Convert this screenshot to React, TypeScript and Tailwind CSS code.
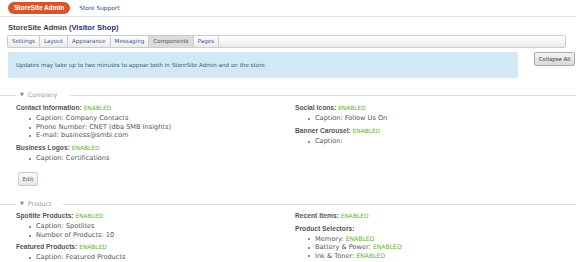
import React from "react";

// ─── Data ─────────────────────────────────────────────────────────────────────
const tabs = ["Settings", "Layout", "Appearance", "Messaging", "Components", "Pages"];

type Item = { label: string; on?: boolean };
type Block = { title: string; on?: boolean; items: Item[] };

const companyLeft: Block[] = [
  {
    title: "Contact Information:",
    on: true,
    items: [
      { label: "Caption: Company Contacts" },
      { label: "Phone Number: CNET (dba SMB Insights)" },
      { label: "E-mail: business@smbi.com" },
    ],
  },
  { title: "Business Logos:", on: true, items: [{ label: "Caption: Certifications" }] },
];

const companyRight: Block[] = [
  { title: "Social Icons:", on: true, items: [{ label: "Caption: Follow Us On" }] },
  { title: "Banner Carousel:", on: true, items: [{ label: "Caption:" }] },
];

const productLeft: Block[] = [
  {
    title: "Spotlite Products:",
    on: true,
    items: [{ label: "Caption: Spotlites" }, { label: "Number of Products: 10" }],
  },
  {
    title: "Featured Products:",
    on: true,
    items: [{ label: "Caption: Featured Products" }, { label: "Number of Products: 4" }],
  },
];

const productRight: Block[] = [
  { title: "Recent Items:", on: true, items: [] },
  {
    title: "Product Selectors:",
    items: [
      { label: "Memory:", on: true },
      { label: "Battery & Power:", on: true },
      { label: "Ink & Toner:", on: true },
    ],
  },
];

const boldFont = { fontFamily: "'Liberation Sans', Arial, sans-serif" };

// ─── Helpers ──────────────────────────────────────────────────────────────────
function Enabled() {
  return (
    <span
      className="font-normal text-[5.9px] text-[#5db52f]"
      style={{ fontFamily: "'DejaVu Sans', Verdana, sans-serif" }}
    >
      ENABLED
    </span>
  );
}

function BlockList({ blocks }: { blocks: Block[] }) {
  return (
    <div className="flex flex-col gap-[1px]">
      {blocks.map(b => (
        <div key={b.title}>
          <div className="font-bold text-[6.7px] text-[#555] leading-[11px]" style={boldFont}>
            {b.title} {b.on && <Enabled />}
          </div>
          {b.items.length > 0 && (
            <div className="pt-[1px] flex flex-col">
              {b.items.map(i => (
                <div key={i.label} className="flex items-center h-[8.5px] text-[6.6px] text-[#555]">
                  <span className="ml-[13px] w-[2px] h-[2px] rounded-full bg-[#666]" />
                  <span className="ml-[5px]">
                    {i.label} {i.on && <span className="text-[6.1px] text-[#5db52f]">ENABLED</span>}
                  </span>
                </div>
              ))}
            </div>
          )}
        </div>
      ))}
    </div>
  );
}

function Section({ name, children }: { name: string; children: React.ReactNode }) {
  return (
    <div>
      <div className="flex items-center h-[10px]">
        <div className="w-[16px] h-px bg-[#ddd]" />
        <span className="px-[4px] text-[6.2px] text-[#999] flex items-center gap-[4px]">
          <span className="text-[5px] text-[#888]">▼</span>
          {name}
        </span>
        <div className="flex-1 h-px bg-[#ddd] ml-[8px]" />
      </div>
      {children}
    </div>
  );
}

// ─── Main Component ───────────────────────────────────────────────────────────
export default function App() {
  return (
    <div
      className="w-[576px] h-[262px] overflow-hidden bg-white text-[6.2px]"
      style={{ fontFamily: "'DejaVu Sans', Verdana, sans-serif" }}
    >
      {/* Top nav */}
      <div className="flex items-center gap-[9px] px-[8px] pt-[2px] pb-[2px] border-b border-[#e2e2e2]">
        <span
          className="rounded-full bg-[#d4552a] text-white font-bold text-[6.5px] px-[6px] h-[12px] flex items-center"
          style={boldFont}
        >
          StoreSite Admin
        </span>
        <span className="text-[#2b3f8e] text-[5.8px]">Store Support</span>
      </div>

      {/* Title */}
      <h1 className="px-[8px] pt-[6px] text-[7.6px] font-bold text-[#444] leading-[10px]" style={boldFont}>
        StoreSite Admin (<span className="text-[#1f2f86]">Visitor Shop</span>)
      </h1>

      {/* Tabs */}
      <div className="ml-[7px] mr-[10px] mt-[2px] h-[13px] flex border border-[#ccc] rounded-[2px] bg-gradient-to-b from-white to-[#ececec] text-[5.6px]">
        {tabs.map(t => (
          <div
            key={t}
            className={`px-[4px] flex items-center border-r border-[#ccc] ${
              t === "Components" ? "bg-[#dcdcdc] text-[#555]" : "text-[#3a5795]"
            }`}
          >
            {t}
          </div>
        ))}
      </div>

      {/* Info + collapse */}
      <div className="flex items-start pl-[8px] pt-[4px] gap-[16px]">
        <div className="shrink-0 w-[510px] h-[26px] bg-[#d2e9f5] rounded-[2px] flex items-center pl-[8px] text-[#3d5a6e] text-[5.6px]">
          Updates may take up to two minutes to appear both in StoreSite Admin and on the store.
        </div>
        <button className="shrink-0 h-[14px] w-[41px] border border-[#aaa] rounded-[2px] bg-gradient-to-b from-[#f4f4f4] to-[#d8d8d8] text-[#333] text-[5.4px] flex items-center justify-center">
          Collapse All
        </button>
      </div>

      {/* Company */}
      <div className="mt-[12px]">
        <Section name="Company">
          <div className="grid grid-cols-[279px_1fr] pl-[16px] pt-[2px]">
            <BlockList blocks={companyLeft} />
            <BlockList blocks={companyRight} />
          </div>
          <button className="block ml-[18px] mt-[9px] w-[20px] h-[14px] border border-[#ccc] rounded-[2px] bg-gradient-to-b from-white to-[#e6e6e6] text-[#555] text-[5.6px]">
            Edit
          </button>
        </Section>
      </div>

      {/* Product */}
      <div className="mt-[13px]">
        <Section name="Product">
          <div className="grid grid-cols-[279px_1fr] pl-[16px] pt-[1px]">
            <BlockList blocks={productLeft} />
            <BlockList blocks={productRight} />
          </div>
        </Section>
      </div>
    </div>
  );
}
